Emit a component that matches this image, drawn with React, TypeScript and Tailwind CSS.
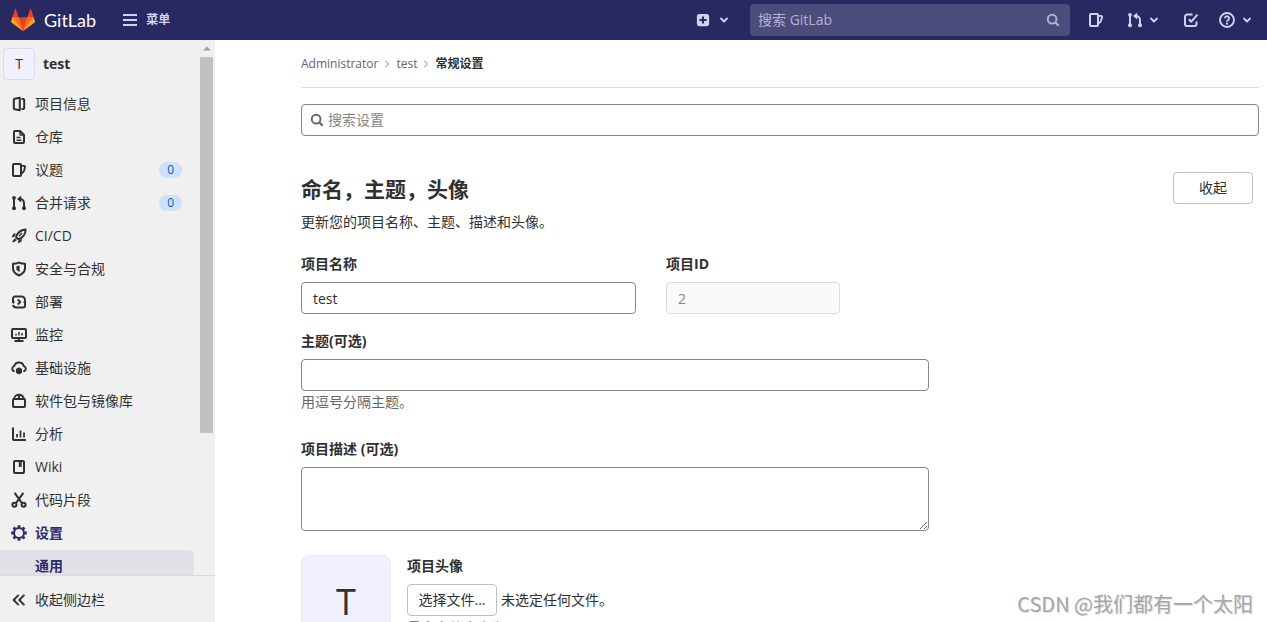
import React from "react";
import type { ReactNode } from "react";

function Glyph({ children, className = "size-4" }: { children: ReactNode; className?: string }) {
  return (
    <svg
      viewBox="0 0 16 16"
      className={`shrink-0 ${className}`}
      fill="none"
      stroke="currentColor"
      strokeWidth={2}
      strokeLinejoin="round"
      aria-hidden="true"
    >
      {children}
    </svg>
  );
}

const icons = {
  project: (
    <>
      <path d="M8.800 1.800 3.600 2.800a1 1 0 0 0-.8 1v8.400a1 1 0 0 0 .8 1l5.200 1z" />
      <path d="M10.500 3h1.700a1 1 0 0 1 1 1v8a1 1 0 0 1-1 1h-1.700" />
    </>
  ),
  doc: (
    <>
      <path d="M3 3a1 1 0 0 1 1-1h5l4 4v7a1 1 0 0 1-1 1H4a1 1 0 0 1-1-1z" />
      <path d="M9 2v4h4" strokeWidth={1.4} />
      <path d="M5.500 8.600h4M5.500 11.200h5" strokeWidth={1.5} />
    </>
  ),
  issues: (
    <>
      <rect x="2" y="2" width="8" height="12" rx="1" />
      <path d="M10 3.900h3a1 1 0 0 1 1 1.300l-1 3.600a3 3 0 0 1-1 1.400l-2 1.600" strokeWidth={1.9} />
    </>
  ),
  merge: (
    <>
      <path d="M3 3v10M13 13.500V8a4 4 0 0 0-4-4" />
      <circle cx="3" cy="2.800" r="1.900" fill="currentColor" stroke="none" />
      <circle cx="3" cy="13.200" r="2" fill="currentColor" stroke="none" />
      <circle cx="13" cy="13.200" r="2" fill="currentColor" stroke="none" />
      <path d="M10.200.6v6.800L6 4z" fill="currentColor" stroke="none" />
    </>
  ),
  rocket: (
    <>
      <path d="M5 9.200C6 5.500 9 2 14.600 1.400 14.500 6.500 11 10 7.200 11.300z" strokeWidth={2} />
      <path d="m8 8.200 3-3.200" strokeWidth={1.4} />
      <path d="M4.800 5.200 2.400 5.800.6 9.600l2.800-.8zM11 10.800l-.5 2.600L7 15.600l.3-3z" fill="currentColor" stroke="none" />
      <path d="m3.800 10.200 2 2-3.400 2.400-1.300-1z" fill="currentColor" stroke="none" />
    </>
  ),
  shield: (
    <>
      <path d="M8 1.600c2 .9 4 1.200 6 1.200v4.400c0 3.300-2.500 5.700-6 7.300-3.500-1.600-6-4-6-7.300V2.800c2 0 4-.3 6-1.200z" />
      <path d="M8.600 4.500v6.800L5.400 8.800V5.200z" fill="currentColor" stroke="none" />
    </>
  ),
  deploy: (
    <>
      <path d="M2 9V4.500a2 2 0 0 1 2-2h6.500A3.500 3.500 0 0 1 14 6v1M14 7.500v4a2 2 0 0 1-2 2H5.500A3.500 3.500 0 0 1 2 11" />
      <path d="m6.800 5.500 2.500 2.500-2.500 2.500" strokeWidth={1.8} />
      <path d="M.8 7.500H4L2.400 10zM12 8.500h3.400L13.700 6z" fill="currentColor" stroke="none" />
    </>
  ),
  monitor: (
    <>
      <rect x="1" y="2" width="14" height="9" rx="1" />
      <path d="M8 11v2.500M3.500 14h9" />
      <path d="M5 6.800v1.700M8 5v3.500M11 6v2.500" strokeWidth={1.500} />
    </>
  ),
  cloud: (
    <>
      <path d="M2.900 11.200A2.700 2.700 0 0 1 3.200 6.100a5 5 0 0 1 9.600 0 2.700 2.700 0 0 1 .3 5.100" strokeWidth={1.900} strokeLinecap="round" />
      <circle cx="8" cy="10.900" r="2.100" strokeWidth={2} />
      <path d="M8 7.500v6.800M5.100 9.200l5.800 3.400M10.900 9.200l-5.800 3.400" strokeWidth={1.200} />
    </>
  ),
  pack: (
    <>
      <rect x="2" y="6" width="12" height="8" rx="1" />
      <path d="M3.200 6a4.800 4.200 0 0 1 9.600 0M8 2v4" strokeWidth={1.900} />
    </>
  ),
  chart: (
    <>
      <path d="M2 1.500V13a1 1 0 0 0 1 1h12" />
      <path d="M6 8v3.500M9.500 4.500v7M13 6.500v5" strokeWidth={1.700} />
    </>
  ),
  wiki: (
    <>
      <rect x="3" y="2" width="10" height="12" rx="1" />
      <path d="M8.500 2.500v5.500M10 2.500V8" strokeWidth={1.400} />
    </>
  ),
  scissors: (
    <>
      <path d="M3.600.8 11 11.200M12.400.8 5 11.200" strokeWidth={2} />
      <circle cx="3.400" cy="12.700" r="2" strokeWidth={2} />
      <circle cx="12.600" cy="12.700" r="2" strokeWidth={2} />
    </>
  ),
  gear: (
    <>
      <circle cx="8" cy="8" r="5" strokeWidth={2.100} />
      <path
        d="M8 .2v2.600M8 13.200v2.600M.2 8h2.600M13.200 8h2.600M2.500 2.500l1.800 1.800M11.700 11.700l1.800 1.800M13.500 2.500l-1.800 1.800M4.300 11.700l-1.800 1.800"
        strokeWidth={2.800}
      />
    </>
  ),
  collapse: <path d="M7.800 2.800 2.600 8l5.200 5.200M13.400 2.800 8.200 8l5.200 5.200" strokeWidth={1.900} />,
  search: (
    <>
      <circle cx="7" cy="7" r="5" strokeWidth={2.200} />
      <path d="m10.500 10.500 4 4" strokeWidth={2.500} />
    </>
  ),
  down: <path d="m4 6 4 4 4-4" strokeWidth={2.400} strokeLinecap="round" />,
  right: <path d="m6 4 4 4-4 4" strokeLinecap="round" />,
  menu: <path d="M1 3h14M1 8h14M1 13h14" />,
  plus: (
    <>
      <rect x="1" y="1" width="14" height="14" rx="3" fill="currentColor" stroke="none" />
      <path d="M8 4v8M4 8h8" stroke="#292961" strokeWidth={2.400} />
    </>
  ),
  todo: (
    <>
      <path d="M9.500 2.500H4a2 2 0 0 0-2 2V12a2 2 0 0 0 2 2h7.500a2 2 0 0 0 2-2V9.500" />
      <path d="m5.800 7.200 2.500 2.500 6.200-7" />
    </>
  ),
  help: (
    <>
      <circle cx="8" cy="8" r="7" strokeWidth={1.900} />
      <path d="M5.900 6.300a2.100 2.100 0 1 1 3.200 1.800c-.8.500-1.100.8-1.100 1.600" strokeWidth={1.800} />
      <circle cx="8" cy="11.700" r="1.100" fill="currentColor" stroke="none" />
    </>
  ),
};

type IconName = keyof typeof icons;

function Icon({ name, className }: { name: IconName; className?: string }) {
  return <Glyph className={className}>{icons[name]}</Glyph>;
}

function Logo() {
  return (
    <svg viewBox="0 0 36 36" className="size-6 shrink-0" aria-hidden="true">
      <path fill="#e24329" d="M2 14l9.380 9v-9l-4-12.280c-.205-.632-1.176-.632-1.380 0z" />
      <path fill="#e24329" d="M34 14l-9.380 9v-9l4-12.280c.205-.632 1.176-.632 1.380 0z" />
      <path fill="#e24329" d="M18 34.380 3 14h30z" />
      <path fill="#fc6d26" d="M18 34.380 11.380 14H2l4 11z" />
      <path fill="#fc6d26" d="M18 34.380 24.620 14H34l-4 11z" />
      <path fill="#fca326" d="M2 14 .1 20.160c-.18.565 0 1.200.5 1.560L18 34.380z" />
      <path fill="#fca326" d="M34 14l1.900 6.160c.18.565 0 1.200-.5 1.560L18 34.380z" />
    </svg>
  );
}

const navItems: { icon: IconName; label: string; count?: number; active?: boolean }[] = [
  { icon: "project", label: "项目信息" },
  { icon: "doc", label: "仓库" },
  { icon: "issues", label: "议题", count: 0 },
  { icon: "merge", label: "合并请求", count: 0 },
  { icon: "rocket", label: "CI/CD" },
  { icon: "shield", label: "安全与合规" },
  { icon: "deploy", label: "部署" },
  { icon: "monitor", label: "监控" },
  { icon: "cloud", label: "基础设施" },
  { icon: "pack", label: "软件包与镜像库" },
  { icon: "chart", label: "分析" },
  { icon: "wiki", label: "Wiki" },
  { icon: "scissors", label: "代码片段" },
  { icon: "gear", label: "设置", active: true },
];

function TopBar() {
  return (
    <header className="flex h-10 shrink-0 items-center bg-[#292961] pr-3.5 pl-[11px] text-[#d1d1f0]">
      <a href="#" className="flex items-center gap-[9px] text-white">
        <Logo />
        <span className="font-['Lato',sans-serif] text-lg leading-6">GitLab</span>
      </a>
      <button type="button" className="ml-[26px] flex items-center gap-2 text-xs font-bold">
        <Icon name="menu" />
        菜单
      </button>
      <button type="button" aria-label="新建" className="ml-auto flex items-center gap-2">
        <Icon name="plus" className="size-3.5" />
        <Icon name="down" className="size-3" />
      </button>
      <label className="ml-5 flex h-8 w-80 items-center rounded bg-[#4c4c7c] pr-2.5 pl-2">
        <input
          type="search"
          aria-label="搜索 GitLab"
          placeholder="搜索 GitLab"
          className="min-w-0 flex-1 bg-transparent outline-none placeholder:text-[#b2b2d2]"
        />
        <Icon name="search" className="size-3.5 text-[#b2b2d2]" />
      </label>
      <nav className="ml-[18px] flex items-center">
        <a href="#" aria-label="议题">
          <Icon name="issues" />
        </a>
        <button type="button" aria-label="合并请求" className="ml-[23px] flex items-center gap-[5px]">
          <Icon name="merge" />
          <Icon name="down" className="size-3" />
        </button>
        <a href="#" aria-label="待办事项" className="ml-[23px]">
          <Icon name="todo" />
        </a>
        <button type="button" aria-label="帮助" className="ml-5 flex items-center gap-[6px]">
          <Icon name="help" />
          <Icon name="down" className="size-3" />
        </button>
      </nav>
    </header>
  );
}

function Sidebar() {
  return (
    <aside className="flex w-[215px] shrink-0 flex-col bg-[#f0f0f0]">
      <div className="flex min-h-0 flex-1">
        <div className="flex-1 overflow-hidden">
          <a href="#" className="flex items-center gap-2 pt-2 pl-[3px] font-bold">
            <span className="flex size-8 items-center justify-center rounded border border-[#dcdcec] bg-[#f0f0ff] font-normal">
              T
            </span>
            test
          </a>
          <ul className="mt-2 mr-1.5">
            {navItems.map((item) => (
              <li key={item.label} className="pb-px">
                <a
                  href="#"
                  className={`flex h-8 items-center gap-2 pr-3 pl-[11px] ${item.active ? "font-bold text-[#2f2a6b]" : ""}`}
                >
                  <Icon name={item.icon} />
                  <span className="flex-1">{item.label}</span>
                  {item.count !== undefined && (
                    <span className="rounded-full bg-[#cbe2f9] px-2 text-xs leading-4 text-[#0b5cad]">{item.count}</span>
                  )}
                </a>
              </li>
            ))}
            <li>
              <a
                href="#"
                className="flex h-8 items-center rounded-r bg-[#e1e0e6] pl-[35px] font-bold text-[#2f2a6b]"
              >
                通用
              </a>
            </li>
          </ul>
        </div>
        <div className="mr-0.5 flex w-[13px] flex-col items-center" aria-hidden="true">
          <svg viewBox="0 0 8 4" className="my-[6px] h-[5px] w-2 shrink-0" fill="#a0a0a0">
            <path d="M4 0l4 4H0z" />
          </svg>
          <div className="h-[376px] w-full bg-[#c1c1c1]" />
        </div>
      </div>
      <button type="button" className="flex h-[47px] items-center gap-2 border-t border-[#dbdbdb] pt-px pl-[11px]">
        <Icon name="collapse" />
        收起侧边栏
      </button>
    </aside>
  );
}

const field = "h-8 w-full rounded border border-[#868686] bg-white px-[11px] outline-none";
const labelText = "mb-2 block font-bold";

export default function App() {
  return (
    <div className="relative flex h-screen flex-col overflow-hidden bg-white font-['Open_Sans','Noto_Sans_CJK_SC',sans-serif] text-[14px] leading-5 text-[#303030]">
      <TopBar />
      <div className="flex min-h-0 flex-1">
        <Sidebar />
        <main className="min-w-0 flex-1 overflow-hidden pr-2 pl-[86px]">
          <nav className="flex h-12 items-center gap-[3px] border-b border-[#dbdbdb] text-xs text-[#666]">
            <a href="#">Administrator</a>
            <Icon name="right" className="size-3 text-[#bfbfbf]" />
            <a href="#">test</a>
            <Icon name="right" className="size-3 text-[#bfbfbf]" />
            <a href="#" className="font-bold text-[#303030]">
              常规设置
            </a>
          </nav>

          <label className="mt-4 flex h-8 items-center gap-1 rounded border border-[#868686] px-2">
            <Icon name="search" className="size-3.5 text-[#666]" />
            <input
              type="search"
              aria-label="搜索设置"
              placeholder="搜索设置"
              className="min-w-0 flex-1 outline-none placeholder:text-[#868686]"
            />
          </label>

          <section>
            <div className="mt-9 flex items-start justify-between pr-1.5">
              <div>
                <h1 className="text-[21px] leading-[34px] font-bold">命名，主题，头像</h1>
                <p className="mt-1.5">更新您的项目名称、主题、描述和头像。</p>
              </div>
              <button type="button" className="h-8 w-20 rounded border border-[#bfbfbf]">
                收起
              </button>
            </div>

            <form className="mt-[22px] max-w-[628px]">
              <div className="flex gap-[30px]">
                <div className="w-[335px]">
                  <label htmlFor="name" className={labelText}>
                    项目名称
                  </label>
                  <input id="name" defaultValue="test" className={field} />
                </div>
                <div className="w-[174px]">
                  <label htmlFor="pid" className={labelText}>
                    项目ID
                  </label>
                  <input
                    id="pid"
                    readOnly
                    value="2"
                    className="h-8 w-full rounded border border-[#dbdbdb] bg-[#fafafa] px-[11px] text-[#868686] outline-none"
                  />
                </div>
              </div>

              <div className="mt-[17px]">
                <label htmlFor="topics" className={labelText}>
                  主题(可选)
                </label>
                <input id="topics" className={field} />
                <p className="mt-px text-[#666]">用逗号分隔主题。</p>
              </div>

              <div className="mt-[27px]">
                <label htmlFor="desc" className={labelText}>
                  项目描述 (可选)
                </label>
                <textarea id="desc" className="block h-16 w-full resize rounded border border-[#868686] px-3 outline-none" />
              </div>

              <div className="mt-6 flex gap-4">
                <div className="flex size-[90px] shrink-0 items-center justify-center rounded-lg border border-[#ececf4] bg-[#f0f0ff] pt-1 text-4xl">
                  T
                </div>
                <div>
                  <p className="mt-px mb-2 font-bold">项目头像</p>
                  <div className="flex items-center gap-1">
                    <button type="button" className="h-8 w-[90px] rounded border border-[#bfbfbf]">
                      选择文件...
                    </button>
                    <span>未选定任何文件。</span>
                  </div>
                  <p className="mt-0.5 text-[#666]">最大文件大小为</p>
                </div>
              </div>
            </form>
          </section>
        </main>
      </div>
      <div className="pointer-events-none absolute right-3.5 bottom-1 font-['Noto_Sans_CJK_SC',sans-serif] text-xl leading-7 text-[#a6a6a6] [text-shadow:1px_1px_0_#e0e0e0]">
        CSDN @我们都有一个太阳
      </div>
    </div>
  );
}
